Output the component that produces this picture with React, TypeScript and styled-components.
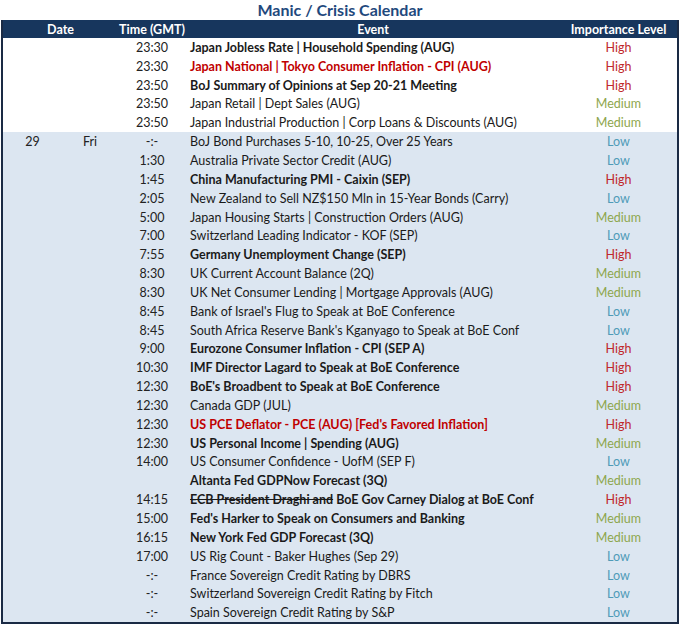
import React from 'react';
import styled, { createGlobalStyle } from 'styled-components';

const Global = createGlobalStyle`
  body { margin: 0; background: #fff; font-family: Lato, "Open Sans", sans-serif; }
`;

type Level = 'High' | 'Medium' | 'Low';

interface Row {
  date?: string;
  day?: string;
  time: string;
  event: React.ReactNode;
  bold?: boolean;
  red?: boolean;
  level: Level;
  shaded?: boolean;
}

const levelColors: Record<Level, string> = {
  High: '#c0282d',
  Medium: '#8ea64e',
  Low: '#4f9bb8',
};

const rows: Row[] = [
  { time: '23:30', event: 'Japan Jobless Rate | Household Spending (AUG)', bold: true, level: 'High' },
  { time: '23:30', event: 'Japan National | Tokyo Consumer Inflation - CPI (AUG)', bold: true, red: true, level: 'High' },
  { time: '23:50', event: 'BoJ Summary of Opinions at Sep 20-21 Meeting', bold: true, level: 'High' },
  { time: '23:50', event: 'Japan Retail | Dept Sales  (AUG)', level: 'Medium' },
  { time: '23:50', event: 'Japan Industrial Production | Corp Loans & Discounts (AUG)', level: 'Medium' },
  { date: '29', day: 'Fri', time: '-:-', event: 'BoJ  Bond Purchases 5-10, 10-25, Over 25 Years', level: 'Low', shaded: true },
  { time: '1:30', event: 'Australia Private Sector Credit (AUG)', level: 'Low', shaded: true },
  { time: '1:45', event: 'China Manufacturing PMI - Caixin (SEP)', bold: true, level: 'High', shaded: true },
  { time: '2:05', event: 'New Zealand to Sell NZ$150 Mln in 15-Year Bonds (Carry)', level: 'Low', shaded: true },
  { time: '5:00', event: 'Japan Housing Starts | Construction Orders (AUG)', level: 'Medium', shaded: true },
  { time: '7:00', event: 'Switzerland Leading Indicator - KOF (SEP)', level: 'Low', shaded: true },
  { time: '7:55', event: 'Germany Unemployment Change (SEP)', bold: true, level: 'High', shaded: true },
  { time: '8:30', event: 'UK Current Account Balance (2Q)', level: 'Medium', shaded: true },
  { time: '8:30', event: 'UK Net Consumer Lending | Mortgage Approvals (AUG)', level: 'Medium', shaded: true },
  { time: '8:45', event: "Bank of Israel's Flug to Speak at BoE Conference", level: 'Low', shaded: true },
  { time: '8:45', event: "South Africa Reserve Bank's Kganyago to Speak at BoE Conf", level: 'Low', shaded: true },
  { time: '9:00', event: 'Eurozone Consumer Inflation - CPI (SEP A)', bold: true, level: 'High', shaded: true },
  { time: '10:30', event: 'IMF Director Lagard to Speak at BoE Conference', bold: true, level: 'High', shaded: true },
  { time: '12:30', event: "BoE's Broadbent to Speak at BoE Conference", bold: true, level: 'High', shaded: true },
  { time: '12:30', event: 'Canada GDP (JUL)', level: 'Medium', shaded: true },
  { time: '12:30', event: "US PCE Deflator - PCE (AUG) [Fed's Favored Inflation]", bold: true, red: true, level: 'High', shaded: true },
  { time: '12:30', event: 'US Personal Income | Spending (AUG)', bold: true, level: 'Medium', shaded: true },
  { time: '14:00', event: 'US Consumer Confidence - UofM (SEP F)', level: 'Low', shaded: true },
  { time: '', event: 'Altanta Fed GDPNow Forecast (3Q)', bold: true, level: 'Medium', shaded: true },
  { time: '14:15', event: <><s>ECB President Draghi and</s> BoE Gov Carney Dialog at BoE Conf</>, bold: true, level: 'High', shaded: true },
  { time: '15:00', event: "Fed's Harker to Speak on Consumers and Banking", bold: true, level: 'Medium', shaded: true },
  { time: '16:15', event: 'New York Fed GDP Forecast (3Q)', bold: true, level: 'Medium', shaded: true },
  { time: '17:00', event: 'US Rig Count - Baker Hughes (Sep 29)', level: 'Low', shaded: true },
  { time: '-:-', event: 'France Sovereign Credit Rating by DBRS', level: 'Low', shaded: true },
  { time: '-:-', event: 'Switzerland Sovereign Credit Rating by Fitch', level: 'Low', shaded: true },
  { time: '-:-', event: 'Spain Sovereign Credit Rating by S&P', level: 'Low', shaded: true },
];

const Page = styled.div`
  width: 680px;
`;

const Title = styled.div`
  height: 20px;
  line-height: 20px;
  text-align: center;
  font-size: 16px;
  font-weight: bold;
  color: #1f497d;
`;

const Table = styled.div`
  margin: 0 1px;
  border: 2px solid #1a2a44;
  border-top: none;
`;

const grid = `
  display: grid;
  grid-template-columns: 59px 56px 68px 374px 1fr;
  align-items: center;
`;

const Header = styled.div`
  ${grid}
  height: 18px;
  background: #17365d;
  color: #fff;
  font-size: 12.5px;
  font-weight: bold;
`;

const HeadCell = styled.div<{ $span?: number; $align?: string }>`
  grid-column: span ${p => p.$span ?? 1};
  text-align: ${p => p.$align ?? 'center'};
`;

const RowLine = styled.div<{ $shaded?: boolean }>`
  ${grid}
  height: 18.85px;
  background: ${p => (p.$shaded ? '#dce6f1' : '#fff')};
  font-size: 12.5px;
  color: #222;
`;

const Center = styled.div`
  text-align: center;
`;

const Event = styled.div<{ $bold?: boolean; $red?: boolean }>`
  padding-left: 4px;
  white-space: nowrap;
  font-weight: ${p => (p.$bold ? 'bold' : 'normal')};
  color: ${p => (p.$red ? '#c00000' : '#1a1a1a')};
`;

const Importance = styled.div<{ $level: Level }>`
  text-align: center;
  color: ${p => levelColors[p.$level]};
`;

export default function App() {
  return (
    <Page>
      <Global />
      <Title>Manic / Crisis Calendar</Title>
      <Table>
        <Header>
          <HeadCell $span={2}>Date</HeadCell>
          <HeadCell>Time (GMT)</HeadCell>
          <HeadCell>Event</HeadCell>
          <HeadCell>Importance Level</HeadCell>
        </Header>
        {rows.map((r, i) => (
          <RowLine key={i} $shaded={r.shaded}>
            <Center>{r.date}</Center>
            <Center>{r.day}</Center>
            <Center>{r.time}</Center>
            <Event $bold={r.bold} $red={r.red}>{r.event}</Event>
            <Importance $level={r.level}>{r.level}</Importance>
          </RowLine>
        ))}
      </Table>
    </Page>
  );
}
